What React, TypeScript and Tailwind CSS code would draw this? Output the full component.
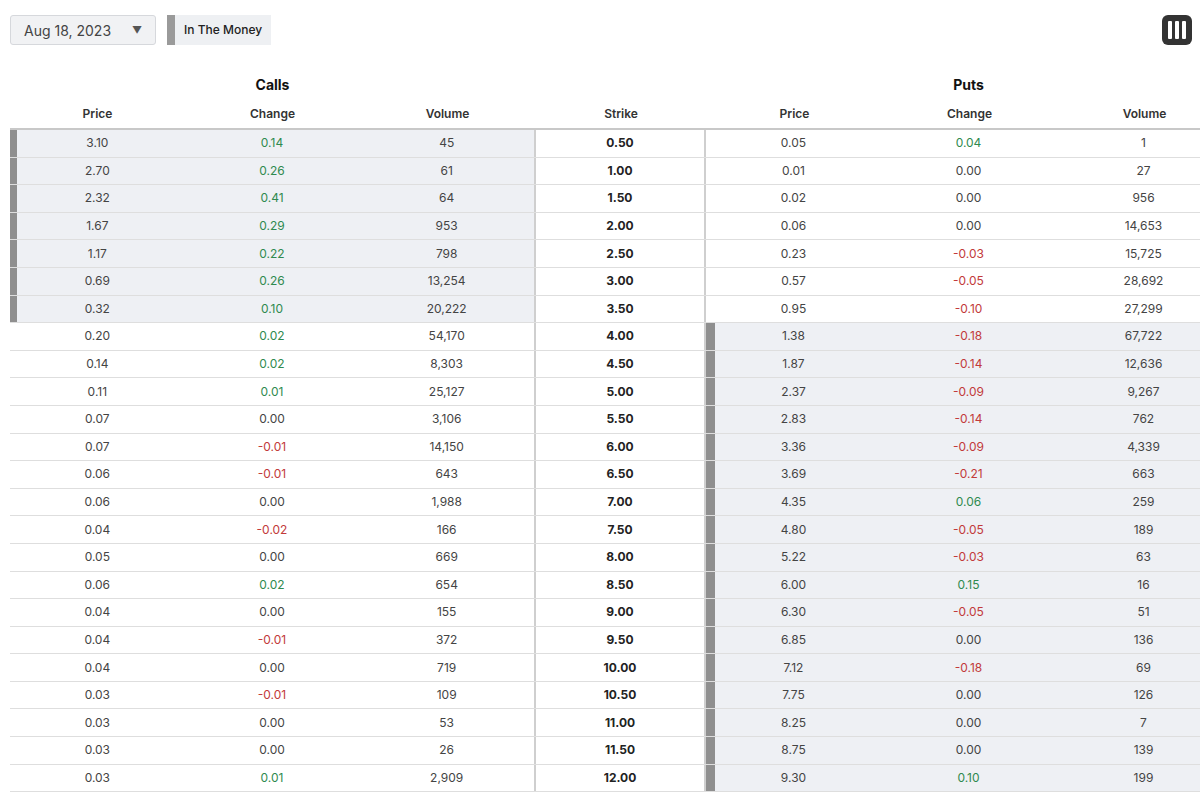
const rows: [string, string, string, string, string, string, string][] = [
  ["3.10", "0.14", "45", "0.50", "0.05", "0.04", "1"],
  ["2.70", "0.26", "61", "1.00", "0.01", "0.00", "27"],
  ["2.32", "0.41", "64", "1.50", "0.02", "0.00", "956"],
  ["1.67", "0.29", "953", "2.00", "0.06", "0.00", "14,653"],
  ["1.17", "0.22", "798", "2.50", "0.23", "-0.03", "15,725"],
  ["0.69", "0.26", "13,254", "3.00", "0.57", "-0.05", "28,692"],
  ["0.32", "0.10", "20,222", "3.50", "0.95", "-0.10", "27,299"],
  ["0.20", "0.02", "54,170", "4.00", "1.38", "-0.18", "67,722"],
  ["0.14", "0.02", "8,303", "4.50", "1.87", "-0.14", "12,636"],
  ["0.11", "0.01", "25,127", "5.00", "2.37", "-0.09", "9,267"],
  ["0.07", "0.00", "3,106", "5.50", "2.83", "-0.14", "762"],
  ["0.07", "-0.01", "14,150", "6.00", "3.36", "-0.09", "4,339"],
  ["0.06", "-0.01", "643", "6.50", "3.69", "-0.21", "663"],
  ["0.06", "0.00", "1,988", "7.00", "4.35", "0.06", "259"],
  ["0.04", "-0.02", "166", "7.50", "4.80", "-0.05", "189"],
  ["0.05", "0.00", "669", "8.00", "5.22", "-0.03", "63"],
  ["0.06", "0.02", "654", "8.50", "6.00", "0.15", "16"],
  ["0.04", "0.00", "155", "9.00", "6.30", "-0.05", "51"],
  ["0.04", "-0.01", "372", "9.50", "6.85", "0.00", "136"],
  ["0.04", "0.00", "719", "10.00", "7.12", "-0.18", "69"],
  ["0.03", "-0.01", "109", "10.50", "7.75", "0.00", "126"],
  ["0.03", "0.00", "53", "11.00", "8.25", "0.00", "7"],
  ["0.03", "0.00", "26", "11.50", "8.75", "0.00", "139"],
  ["0.03", "0.01", "2,909", "12.00", "9.30", "0.10", "199"],
];

function changeColor(v: string) {
  const n = parseFloat(v);
  if (n > 0) return "text-[#2f8a4f]";
  if (n < 0) return "text-[#c23a3a]";
  return "text-[#444]";
}

function Cell({ children, className = "" }: { children: React.ReactNode; className?: string }) {
  return <div className={`w-[175px] flex items-center justify-center ${className}`}>{children}</div>;
}

export default function App() {
  return (
    <div className="w-[1200px] h-[803px] overflow-hidden bg-white text-[#333] font-[Inter,sans-serif]">
      <div className="flex items-center justify-between pl-[10px] pr-[8px] pt-[15px]">
        <div className="flex items-center gap-[11px]">
          <div className="w-[146px] h-[30px] flex items-center justify-between px-[13px] rounded-[3px] border border-[#d6d8dc] bg-[#f1f2f4] text-[14px] text-[#444]">
            <span>Aug 18, 2023</span>
            <span className="text-[10px] text-[#555]">▼</span>
          </div>
          <div className="flex h-[30px] bg-[#eef0f3]">
            <div className="w-[8px] bg-[#9a9a9a]" />
            <div className="px-[9px] flex items-center text-[12px] font-medium text-[#222]">In The Money</div>
          </div>
        </div>
        <div className="w-[30px] h-[30px] rounded-[6px] bg-[#333] flex items-center justify-center gap-[3px]">
          <div className="w-[4px] h-[18px] bg-white rounded-[1px]" />
          <div className="w-[4px] h-[18px] bg-white rounded-[1px]" />
          <div className="w-[4px] h-[18px] bg-white rounded-[1px]" />
        </div>
      </div>

      <div className="pl-[10px] w-[1240px]">
        <div className="flex mt-[29px] h-[22px] text-[14px] font-bold text-[#111]">
          <div className="w-[524px] text-center pl-[1px]">Calls</div>
          <div className="w-[172px]" />
          <div className="w-[525px] text-center">Puts</div>
        </div>
        <div className="flex h-[34px] items-end pb-[5px] text-[12px] font-semibold text-[#333] border-b-2 border-[#c8c8c8]">
          <Cell>Price</Cell>
          <Cell>Change</Cell>
          <Cell className="w-[174px]">Volume</Cell>
          <div className="w-[172px] text-center">Strike</div>
          <Cell>Price</Cell>
          <Cell>Change</Cell>
          <Cell>Volume</Cell>
        </div>
        {rows.map((r, i) => {
          const callItm = i < 7;
          const putItm = i >= 7;
          return (
            <div key={i} className="flex h-[27.6px] text-[12px] text-[#444] border-b border-[#dedede]">
              <div className={`relative flex w-[524px] ${callItm ? "bg-[#eef0f4]" : ""}`}>
                {callItm && <div className="absolute left-0 top-0 bottom-0 w-[7px] bg-[#8f8f8f]" />}
                <Cell>{r[0]}</Cell>
                <Cell className={changeColor(r[1])}>{r[1]}</Cell>
                <Cell className="w-[174px]">{r[2]}</Cell>
              </div>
              <div className="w-[172px] flex items-center justify-center font-bold text-[#222] border-x-2 border-[#cfcfcf]">
                {r[3]}
              </div>
              <div className={`relative flex ${putItm ? "bg-[#eef0f4]" : ""}`}>
                {putItm && <div className="absolute left-0 top-0 bottom-0 w-[9px] bg-[#8f8f8f]" />}
                <Cell>{r[4]}</Cell>
                <Cell className={changeColor(r[5])}>{r[5]}</Cell>
                <Cell>{r[6]}</Cell>
              </div>
            </div>
          );
        })}
      </div>
    </div>
  );
}
